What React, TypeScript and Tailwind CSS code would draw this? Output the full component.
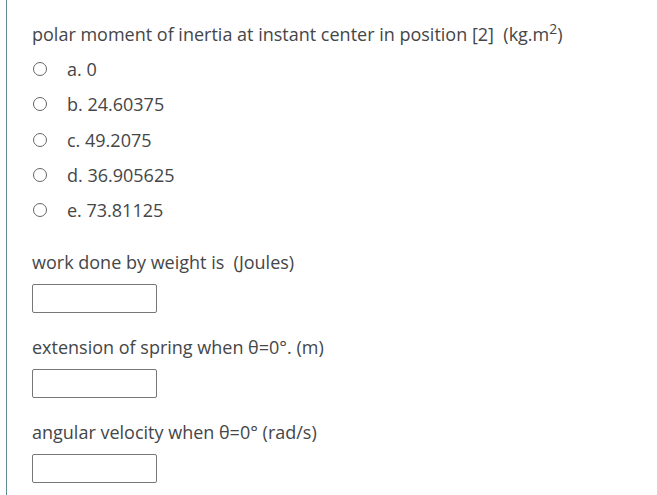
const options = ["a. 0", "b. 24.60375", "c. 49.2075", "d. 36.905625", "e. 73.81125"];

function Blank({ label }: { label: string }) {
  return (
    <div className="flex flex-col">
      <p className="h-[24px] whitespace-pre leading-[24px]">{label}</p>
      <div className="mt-[10px] h-[29px] w-[125px] rounded-[2px] border border-[#777]" />
    </div>
  );
}

export default function App() {
  return (
    <div
      className="h-[495px] w-[657px] bg-white text-[#444648]"
      style={{ fontFamily: '"Open Sans", sans-serif' }}
    >
      <div className="ml-[6px] h-full border-l border-[#5e8a92] pl-[25px] pt-[22px] text-[18px]">
        <p className="h-[24px] whitespace-pre leading-[24px]">
          polar moment of inertia at instant center in position [2]  (kg.m
          <sup className="relative -top-[7px] text-[14px]">2</sup>)
        </p>
        <div className="mt-[11px] flex flex-col gap-[11.3px]">
          {options.map((o) => (
            <div key={o} className="flex h-[24px] items-center">
              <span className="ml-[1px] h-[14px] w-[14px] rounded-full border border-[#666]" />
              <span className="ml-[20px] leading-[24px]">{o}</span>
            </div>
          ))}
        </div>
        <div className="mt-[28px] flex flex-col gap-[22px]">
          <Blank label="work done by weight is  (Joules)" />
          <Blank label="extension of spring when θ=0°. (m)" />
          <Blank label="angular velocity when θ=0° (rad/s)" />
        </div>
      </div>
    </div>
  );
}
